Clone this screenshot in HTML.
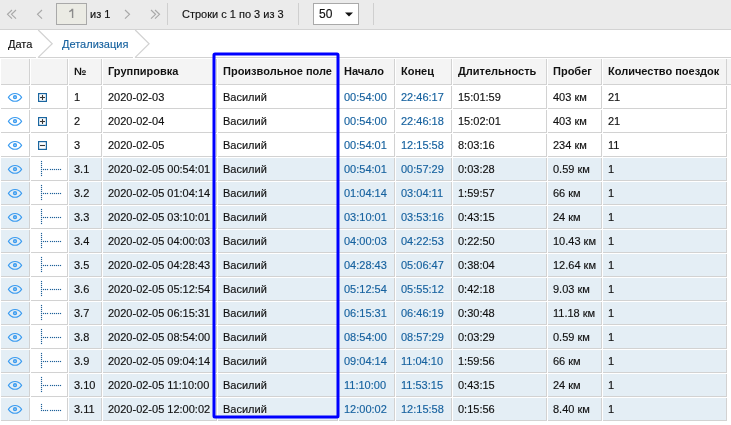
<!DOCTYPE html><html><head><meta charset="utf-8"><style>
html,body{margin:0;padding:0;background:#fff;}
body{width:731px;height:425px;overflow:hidden;position:relative;font-family:"Liberation Sans",sans-serif;font-size:11px;color:#111;}
.a{position:absolute;}
.c{position:absolute;box-sizing:border-box;border-right:1px solid #d2d2d2;border-bottom:1px solid #d2d2d2;}
.t{position:absolute;white-space:nowrap;line-height:12px;height:12px;will-change:transform;-webkit-text-stroke:0.15px currentColor;}
.b{font-weight:bold;-webkit-text-stroke:0;}
.bl{color:#17629f;}

</style></head><body>
<div class="a" style="left:0;top:0;width:731px;height:29px;background:#ebebeb;"></div>
<div class="a" style="left:0;top:29px;width:731px;height:1px;background:#d3d3d3;"></div>
<div class="a" style="left:56px;top:3px;width:31px;height:22px;box-sizing:border-box;border:1px solid #a9a9a9;background:#ebebe4;"></div>
<svg class="a" style="left:60px;top:5px;" width="20" height="16" viewBox="60 5 20 16"><path d="M72.6,18 L72.6,8.8 M72.6,8.9 C71.8,10.3 70.6,11.2 69.2,11.6" fill="none" stroke="#8c8c8c" stroke-width="1.4"/></svg>
<div class="t" style="left:90px;top:8px;">из 1</div>
<div class="t" style="left:182px;top:8px;">Строки с 1 по 3 из 3</div>
<div class="a" style="left:313px;top:3px;width:46px;height:22px;box-sizing:border-box;border:1px solid #a9a9a9;background:#fff;"></div>
<div class="t" style="left:319px;top:8px;font-size:12px;">50</div>
<svg class="a" style="left:0;top:0;" width="731" height="29" viewBox="0 0 731 29"><g fill="none" stroke="#a8a8a8" stroke-width="1.15"><polyline points="12,10 7.5,14.3 12,18.7"/><polyline points="16,10 11.5,14.3 16,18.7"/><polyline points="42,10 37.5,14.3 42,18.7"/><polyline points="125,10 129.5,14.3 125,18.7"/><polyline points="151,10 155.5,14.3 151,18.7"/><polyline points="155,10 159.5,14.3 155,18.7"/></g><g stroke="#cfcfcf" stroke-width="1"><line x1="167.5" y1="3" x2="167.5" y2="25"/><line x1="298.5" y1="3" x2="298.5" y2="25"/><line x1="373.5" y1="3" x2="373.5" y2="25"/></g><path d="M345,12.5 L353,12.5 L349,16.5 Z" fill="#111"/></svg>
<div class="a" style="left:0;top:57px;width:731px;height:1px;background:#d2d2d2;"></div>
<div class="a" style="left:36px;top:57px;width:2px;height:1px;background:#fff;"></div><div class="a" style="left:133px;top:57px;width:2px;height:1px;background:#fff;"></div>
<div class="t" style="left:8px;top:38px;">Дата</div>
<div class="t bl" style="left:62px;top:38px;color:#17629f;">Детализация</div>
<svg class="a" style="left:0;top:29px;" width="731" height="31" viewBox="0 29 731 31"><g fill="none" stroke="#d2d2d2" stroke-width="1.2"><polyline points="38.2,30 52.2,43.8 38,57.6"/><polyline points="135.2,30 149.1,43.8 135,57.6"/></g></svg>
<div class="c" style="left:1px;top:59px;width:29px;height:26px;background:#f4f4f4;"></div>
<div class="c" style="left:31px;top:59px;width:37px;height:26px;background:#f4f4f4;"></div>
<div class="c" style="left:69px;top:59px;width:33px;height:26px;background:#f4f4f4;"></div>
<div class="t b" style="left:74px;top:65px;">№</div>
<div class="c" style="left:103px;top:59px;width:114px;height:26px;background:#f4f4f4;"></div>
<div class="t b" style="left:108px;top:65px;">Группировка</div>
<div class="c" style="left:218px;top:59px;width:120px;height:26px;background:#f4f4f4;"></div>
<div class="t b" style="left:223px;top:65px;">Произвольное поле</div>
<div class="c" style="left:339px;top:59px;width:56px;height:26px;background:#f4f4f4;"></div>
<div class="t b" style="left:344px;top:65px;">Начало</div>
<div class="c" style="left:396px;top:59px;width:56px;height:26px;background:#f4f4f4;"></div>
<div class="t b" style="left:401px;top:65px;">Конец</div>
<div class="c" style="left:453px;top:59px;width:94px;height:26px;background:#f4f4f4;"></div>
<div class="t b" style="left:458px;top:65px;">Длительность</div>
<div class="c" style="left:548px;top:59px;width:54px;height:26px;background:#f4f4f4;"></div>
<div class="t b" style="left:553px;top:65px;">Пробег</div>
<div class="c" style="left:603px;top:59px;width:124px;height:26px;background:#f4f4f4;"></div>
<div class="t b" style="left:608px;top:65px;">Количество поездок</div>
<div class="a" style="left:727px;top:59px;width:4px;height:25px;background:#f4f4f4;"></div>
<div class="a" style="left:727px;top:84px;width:4px;height:1px;background:#d2d2d2;"></div>
<div class="c" style="left:1px;top:86px;width:29px;height:23px;background:#fff;"></div>
<div class="c" style="left:31px;top:86px;width:37px;height:23px;background:#fff;"></div>
<div class="c" style="left:69px;top:86px;width:33px;height:23px;background:#fff;"></div>
<div class="c" style="left:103px;top:86px;width:114px;height:23px;background:#fff;"></div>
<div class="c" style="left:218px;top:86px;width:120px;height:23px;background:#fff;"></div>
<div class="c" style="left:339px;top:86px;width:56px;height:23px;background:#fff;"></div>
<div class="c" style="left:396px;top:86px;width:56px;height:23px;background:#fff;"></div>
<div class="c" style="left:453px;top:86px;width:94px;height:23px;background:#fff;"></div>
<div class="c" style="left:548px;top:86px;width:54px;height:23px;background:#fff;"></div>
<div class="c" style="left:603px;top:86px;width:124px;height:23px;background:#fff;"></div>
<svg class="a" style="left:5px;top:90px;" width="20" height="14" viewBox="5 90 20 14"><path d="M8.4,97.4 C10.2,94.5 12.5,93.5 15,93.5 C17.5,93.5 19.8,94.5 21.6,97.4 C19.8,100.3 17.5,101.3 15,101.3 C12.5,101.3 10.2,100.3 8.4,97.4 Z" fill="none" stroke="#3a9bf0" stroke-width="1.1"/><circle cx="15" cy="97.2" r="1.35" fill="none" stroke="#3a9bf0" stroke-width="1.5"/></svg>
<svg class="a" style="left:36px;top:91px;" width="13" height="13" viewBox="36 91 13 13"><rect x="38.6" y="93.60" width="7.8" height="7.8" fill="#fff" stroke="#1a66a0" stroke-width="1.2"/><line x1="40" y1="97.5" x2="45" y2="97.5" stroke="#383838" stroke-width="1.1"/><line x1="42.5" y1="95.0" x2="42.5" y2="100.0" stroke="#383838" stroke-width="1.1"/></svg>
<div class="t" style="left:74px;top:91px;">1</div>
<div class="t" style="left:108px;top:91px;">2020-02-03</div>
<div class="t" style="left:223px;top:91px;">Василий</div>
<div class="t bl" style="left:344px;top:91px;">00:54:00</div>
<div class="t bl" style="left:401px;top:91px;">22:46:17</div>
<div class="t" style="left:458px;top:91px;">15:01:59</div>
<div class="t" style="left:553px;top:91px;">403 км</div>
<div class="t" style="left:608px;top:91px;">21</div>
<div class="c" style="left:1px;top:110px;width:29px;height:23px;background:#fff;"></div>
<div class="c" style="left:31px;top:110px;width:37px;height:23px;background:#fff;"></div>
<div class="c" style="left:69px;top:110px;width:33px;height:23px;background:#fff;"></div>
<div class="c" style="left:103px;top:110px;width:114px;height:23px;background:#fff;"></div>
<div class="c" style="left:218px;top:110px;width:120px;height:23px;background:#fff;"></div>
<div class="c" style="left:339px;top:110px;width:56px;height:23px;background:#fff;"></div>
<div class="c" style="left:396px;top:110px;width:56px;height:23px;background:#fff;"></div>
<div class="c" style="left:453px;top:110px;width:94px;height:23px;background:#fff;"></div>
<div class="c" style="left:548px;top:110px;width:54px;height:23px;background:#fff;"></div>
<div class="c" style="left:603px;top:110px;width:124px;height:23px;background:#fff;"></div>
<svg class="a" style="left:5px;top:114px;" width="20" height="14" viewBox="5 114 20 14"><path d="M8.4,121.4 C10.2,118.5 12.5,117.5 15,117.5 C17.5,117.5 19.8,118.5 21.6,121.4 C19.8,124.3 17.5,125.3 15,125.3 C12.5,125.3 10.2,124.3 8.4,121.4 Z" fill="none" stroke="#3a9bf0" stroke-width="1.1"/><circle cx="15" cy="121.2" r="1.35" fill="none" stroke="#3a9bf0" stroke-width="1.5"/></svg>
<svg class="a" style="left:36px;top:115px;" width="13" height="13" viewBox="36 115 13 13"><rect x="38.6" y="117.60" width="7.8" height="7.8" fill="#fff" stroke="#1a66a0" stroke-width="1.2"/><line x1="40" y1="121.5" x2="45" y2="121.5" stroke="#383838" stroke-width="1.1"/><line x1="42.5" y1="119.0" x2="42.5" y2="124.0" stroke="#383838" stroke-width="1.1"/></svg>
<div class="t" style="left:74px;top:115px;">2</div>
<div class="t" style="left:108px;top:115px;">2020-02-04</div>
<div class="t" style="left:223px;top:115px;">Василий</div>
<div class="t bl" style="left:344px;top:115px;">00:54:00</div>
<div class="t bl" style="left:401px;top:115px;">22:46:18</div>
<div class="t" style="left:458px;top:115px;">15:02:01</div>
<div class="t" style="left:553px;top:115px;">403 км</div>
<div class="t" style="left:608px;top:115px;">21</div>
<div class="c" style="left:1px;top:134px;width:29px;height:23px;background:#fff;"></div>
<div class="c" style="left:31px;top:134px;width:37px;height:23px;background:#fff;"></div>
<div class="c" style="left:69px;top:134px;width:33px;height:23px;background:#fff;"></div>
<div class="c" style="left:103px;top:134px;width:114px;height:23px;background:#fff;"></div>
<div class="c" style="left:218px;top:134px;width:120px;height:23px;background:#fff;"></div>
<div class="c" style="left:339px;top:134px;width:56px;height:23px;background:#fff;"></div>
<div class="c" style="left:396px;top:134px;width:56px;height:23px;background:#fff;"></div>
<div class="c" style="left:453px;top:134px;width:94px;height:23px;background:#fff;"></div>
<div class="c" style="left:548px;top:134px;width:54px;height:23px;background:#fff;"></div>
<div class="c" style="left:603px;top:134px;width:124px;height:23px;background:#fff;"></div>
<svg class="a" style="left:5px;top:138px;" width="20" height="14" viewBox="5 138 20 14"><path d="M8.4,145.4 C10.2,142.5 12.5,141.5 15,141.5 C17.5,141.5 19.8,142.5 21.6,145.4 C19.8,148.3 17.5,149.3 15,149.3 C12.5,149.3 10.2,148.3 8.4,145.4 Z" fill="none" stroke="#3a9bf0" stroke-width="1.1"/><circle cx="15" cy="145.2" r="1.35" fill="none" stroke="#3a9bf0" stroke-width="1.5"/></svg>
<svg class="a" style="left:36px;top:139px;" width="13" height="13" viewBox="36 139 13 13"><rect x="38.6" y="141.60" width="7.8" height="7.8" fill="#fff" stroke="#1a66a0" stroke-width="1.2"/><line x1="40" y1="145.5" x2="45" y2="145.5" stroke="#383838" stroke-width="1.1"/></svg>
<div class="t" style="left:74px;top:139px;">3</div>
<div class="t" style="left:108px;top:139px;">2020-02-05</div>
<div class="t" style="left:223px;top:139px;">Василий</div>
<div class="t bl" style="left:344px;top:139px;">00:54:01</div>
<div class="t bl" style="left:401px;top:139px;">12:15:58</div>
<div class="t" style="left:458px;top:139px;">8:03:16</div>
<div class="t" style="left:553px;top:139px;">234 км</div>
<div class="t" style="left:608px;top:139px;">11</div>
<div class="c" style="left:1px;top:158px;width:29px;height:23px;background:#e4eef5;"></div>
<div class="c" style="left:31px;top:158px;width:37px;height:23px;background:#fff;"></div>
<div class="c" style="left:69px;top:158px;width:33px;height:23px;background:#e4eef5;"></div>
<div class="c" style="left:103px;top:158px;width:114px;height:23px;background:#e4eef5;"></div>
<div class="c" style="left:218px;top:158px;width:120px;height:23px;background:#e4eef5;"></div>
<div class="c" style="left:339px;top:158px;width:56px;height:23px;background:#e4eef5;"></div>
<div class="c" style="left:396px;top:158px;width:56px;height:23px;background:#e4eef5;"></div>
<div class="c" style="left:453px;top:158px;width:94px;height:23px;background:#e4eef5;"></div>
<div class="c" style="left:548px;top:158px;width:54px;height:23px;background:#e4eef5;"></div>
<div class="c" style="left:603px;top:158px;width:124px;height:23px;background:#e4eef5;"></div>
<svg class="a" style="left:5px;top:162px;" width="20" height="14" viewBox="5 162 20 14"><path d="M8.4,169.4 C10.2,166.5 12.5,165.5 15,165.5 C17.5,165.5 19.8,166.5 21.6,169.4 C19.8,172.3 17.5,173.3 15,173.3 C12.5,173.3 10.2,172.3 8.4,169.4 Z" fill="none" stroke="#3a9bf0" stroke-width="1.1"/><circle cx="15" cy="169.2" r="1.35" fill="none" stroke="#3a9bf0" stroke-width="1.5"/></svg>
<svg class="a" style="left:31px;top:158px;" width="36" height="23" viewBox="31 158 36 23"><g fill="#1d6199"><rect x="40.93" y="160.93" width="1.15" height="1.15"/><rect x="40.93" y="162.93" width="1.15" height="1.15"/><rect x="40.93" y="164.93" width="1.15" height="1.15"/><rect x="40.93" y="166.93" width="1.15" height="1.15"/><rect x="40.93" y="168.93" width="1.15" height="1.15"/><rect x="40.93" y="170.93" width="1.15" height="1.15"/><rect x="40.93" y="172.93" width="1.15" height="1.15"/><rect x="40.93" y="174.93" width="1.15" height="1.15"/><rect x="42.93" y="168.93" width="1.15" height="1.15"/><rect x="44.93" y="168.93" width="1.15" height="1.15"/><rect x="46.93" y="168.93" width="1.15" height="1.15"/><rect x="49.93" y="168.93" width="1.15" height="1.15"/><rect x="51.93" y="168.93" width="1.15" height="1.15"/><rect x="53.93" y="168.93" width="1.15" height="1.15"/><rect x="55.93" y="168.93" width="1.15" height="1.15"/><rect x="57.93" y="168.93" width="1.15" height="1.15"/><rect x="59.93" y="168.93" width="1.15" height="1.15"/></g></svg>
<div class="t" style="left:74px;top:163px;">3.1</div>
<div class="t" style="left:108px;top:163px;">2020-02-05 00:54:01</div>
<div class="t" style="left:223px;top:163px;">Василий</div>
<div class="t bl" style="left:344px;top:163px;">00:54:01</div>
<div class="t bl" style="left:401px;top:163px;">00:57:29</div>
<div class="t" style="left:458px;top:163px;">0:03:28</div>
<div class="t" style="left:553px;top:163px;">0.59 км</div>
<div class="t" style="left:608px;top:163px;">1</div>
<div class="c" style="left:1px;top:182px;width:29px;height:23px;background:#e4eef5;"></div>
<div class="c" style="left:31px;top:182px;width:37px;height:23px;background:#fff;"></div>
<div class="c" style="left:69px;top:182px;width:33px;height:23px;background:#e4eef5;"></div>
<div class="c" style="left:103px;top:182px;width:114px;height:23px;background:#e4eef5;"></div>
<div class="c" style="left:218px;top:182px;width:120px;height:23px;background:#e4eef5;"></div>
<div class="c" style="left:339px;top:182px;width:56px;height:23px;background:#e4eef5;"></div>
<div class="c" style="left:396px;top:182px;width:56px;height:23px;background:#e4eef5;"></div>
<div class="c" style="left:453px;top:182px;width:94px;height:23px;background:#e4eef5;"></div>
<div class="c" style="left:548px;top:182px;width:54px;height:23px;background:#e4eef5;"></div>
<div class="c" style="left:603px;top:182px;width:124px;height:23px;background:#e4eef5;"></div>
<svg class="a" style="left:5px;top:186px;" width="20" height="14" viewBox="5 186 20 14"><path d="M8.4,193.4 C10.2,190.5 12.5,189.5 15,189.5 C17.5,189.5 19.8,190.5 21.6,193.4 C19.8,196.3 17.5,197.3 15,197.3 C12.5,197.3 10.2,196.3 8.4,193.4 Z" fill="none" stroke="#3a9bf0" stroke-width="1.1"/><circle cx="15" cy="193.2" r="1.35" fill="none" stroke="#3a9bf0" stroke-width="1.5"/></svg>
<svg class="a" style="left:31px;top:182px;" width="36" height="23" viewBox="31 182 36 23"><g fill="#1d6199"><rect x="40.93" y="184.93" width="1.15" height="1.15"/><rect x="40.93" y="186.93" width="1.15" height="1.15"/><rect x="40.93" y="188.93" width="1.15" height="1.15"/><rect x="40.93" y="190.93" width="1.15" height="1.15"/><rect x="40.93" y="192.93" width="1.15" height="1.15"/><rect x="40.93" y="194.93" width="1.15" height="1.15"/><rect x="40.93" y="196.93" width="1.15" height="1.15"/><rect x="40.93" y="198.93" width="1.15" height="1.15"/><rect x="42.93" y="192.93" width="1.15" height="1.15"/><rect x="44.93" y="192.93" width="1.15" height="1.15"/><rect x="46.93" y="192.93" width="1.15" height="1.15"/><rect x="49.93" y="192.93" width="1.15" height="1.15"/><rect x="51.93" y="192.93" width="1.15" height="1.15"/><rect x="53.93" y="192.93" width="1.15" height="1.15"/><rect x="55.93" y="192.93" width="1.15" height="1.15"/><rect x="57.93" y="192.93" width="1.15" height="1.15"/><rect x="59.93" y="192.93" width="1.15" height="1.15"/></g></svg>
<div class="t" style="left:74px;top:187px;">3.2</div>
<div class="t" style="left:108px;top:187px;">2020-02-05 01:04:14</div>
<div class="t" style="left:223px;top:187px;">Василий</div>
<div class="t bl" style="left:344px;top:187px;">01:04:14</div>
<div class="t bl" style="left:401px;top:187px;">03:04:11</div>
<div class="t" style="left:458px;top:187px;">1:59:57</div>
<div class="t" style="left:553px;top:187px;">66 км</div>
<div class="t" style="left:608px;top:187px;">1</div>
<div class="c" style="left:1px;top:206px;width:29px;height:23px;background:#e4eef5;"></div>
<div class="c" style="left:31px;top:206px;width:37px;height:23px;background:#fff;"></div>
<div class="c" style="left:69px;top:206px;width:33px;height:23px;background:#e4eef5;"></div>
<div class="c" style="left:103px;top:206px;width:114px;height:23px;background:#e4eef5;"></div>
<div class="c" style="left:218px;top:206px;width:120px;height:23px;background:#e4eef5;"></div>
<div class="c" style="left:339px;top:206px;width:56px;height:23px;background:#e4eef5;"></div>
<div class="c" style="left:396px;top:206px;width:56px;height:23px;background:#e4eef5;"></div>
<div class="c" style="left:453px;top:206px;width:94px;height:23px;background:#e4eef5;"></div>
<div class="c" style="left:548px;top:206px;width:54px;height:23px;background:#e4eef5;"></div>
<div class="c" style="left:603px;top:206px;width:124px;height:23px;background:#e4eef5;"></div>
<svg class="a" style="left:5px;top:210px;" width="20" height="14" viewBox="5 210 20 14"><path d="M8.4,217.4 C10.2,214.5 12.5,213.5 15,213.5 C17.5,213.5 19.8,214.5 21.6,217.4 C19.8,220.3 17.5,221.3 15,221.3 C12.5,221.3 10.2,220.3 8.4,217.4 Z" fill="none" stroke="#3a9bf0" stroke-width="1.1"/><circle cx="15" cy="217.2" r="1.35" fill="none" stroke="#3a9bf0" stroke-width="1.5"/></svg>
<svg class="a" style="left:31px;top:206px;" width="36" height="23" viewBox="31 206 36 23"><g fill="#1d6199"><rect x="40.93" y="208.93" width="1.15" height="1.15"/><rect x="40.93" y="210.93" width="1.15" height="1.15"/><rect x="40.93" y="212.93" width="1.15" height="1.15"/><rect x="40.93" y="214.93" width="1.15" height="1.15"/><rect x="40.93" y="216.93" width="1.15" height="1.15"/><rect x="40.93" y="218.93" width="1.15" height="1.15"/><rect x="40.93" y="220.93" width="1.15" height="1.15"/><rect x="40.93" y="222.93" width="1.15" height="1.15"/><rect x="42.93" y="216.93" width="1.15" height="1.15"/><rect x="44.93" y="216.93" width="1.15" height="1.15"/><rect x="46.93" y="216.93" width="1.15" height="1.15"/><rect x="49.93" y="216.93" width="1.15" height="1.15"/><rect x="51.93" y="216.93" width="1.15" height="1.15"/><rect x="53.93" y="216.93" width="1.15" height="1.15"/><rect x="55.93" y="216.93" width="1.15" height="1.15"/><rect x="57.93" y="216.93" width="1.15" height="1.15"/><rect x="59.93" y="216.93" width="1.15" height="1.15"/></g></svg>
<div class="t" style="left:74px;top:211px;">3.3</div>
<div class="t" style="left:108px;top:211px;">2020-02-05 03:10:01</div>
<div class="t" style="left:223px;top:211px;">Василий</div>
<div class="t bl" style="left:344px;top:211px;">03:10:01</div>
<div class="t bl" style="left:401px;top:211px;">03:53:16</div>
<div class="t" style="left:458px;top:211px;">0:43:15</div>
<div class="t" style="left:553px;top:211px;">24 км</div>
<div class="t" style="left:608px;top:211px;">1</div>
<div class="c" style="left:1px;top:230px;width:29px;height:23px;background:#e4eef5;"></div>
<div class="c" style="left:31px;top:230px;width:37px;height:23px;background:#fff;"></div>
<div class="c" style="left:69px;top:230px;width:33px;height:23px;background:#e4eef5;"></div>
<div class="c" style="left:103px;top:230px;width:114px;height:23px;background:#e4eef5;"></div>
<div class="c" style="left:218px;top:230px;width:120px;height:23px;background:#e4eef5;"></div>
<div class="c" style="left:339px;top:230px;width:56px;height:23px;background:#e4eef5;"></div>
<div class="c" style="left:396px;top:230px;width:56px;height:23px;background:#e4eef5;"></div>
<div class="c" style="left:453px;top:230px;width:94px;height:23px;background:#e4eef5;"></div>
<div class="c" style="left:548px;top:230px;width:54px;height:23px;background:#e4eef5;"></div>
<div class="c" style="left:603px;top:230px;width:124px;height:23px;background:#e4eef5;"></div>
<svg class="a" style="left:5px;top:234px;" width="20" height="14" viewBox="5 234 20 14"><path d="M8.4,241.4 C10.2,238.5 12.5,237.5 15,237.5 C17.5,237.5 19.8,238.5 21.6,241.4 C19.8,244.3 17.5,245.3 15,245.3 C12.5,245.3 10.2,244.3 8.4,241.4 Z" fill="none" stroke="#3a9bf0" stroke-width="1.1"/><circle cx="15" cy="241.2" r="1.35" fill="none" stroke="#3a9bf0" stroke-width="1.5"/></svg>
<svg class="a" style="left:31px;top:230px;" width="36" height="23" viewBox="31 230 36 23"><g fill="#1d6199"><rect x="40.93" y="232.93" width="1.15" height="1.15"/><rect x="40.93" y="234.93" width="1.15" height="1.15"/><rect x="40.93" y="236.93" width="1.15" height="1.15"/><rect x="40.93" y="238.93" width="1.15" height="1.15"/><rect x="40.93" y="240.93" width="1.15" height="1.15"/><rect x="40.93" y="242.93" width="1.15" height="1.15"/><rect x="40.93" y="244.93" width="1.15" height="1.15"/><rect x="40.93" y="246.93" width="1.15" height="1.15"/><rect x="42.93" y="240.93" width="1.15" height="1.15"/><rect x="44.93" y="240.93" width="1.15" height="1.15"/><rect x="46.93" y="240.93" width="1.15" height="1.15"/><rect x="49.93" y="240.93" width="1.15" height="1.15"/><rect x="51.93" y="240.93" width="1.15" height="1.15"/><rect x="53.93" y="240.93" width="1.15" height="1.15"/><rect x="55.93" y="240.93" width="1.15" height="1.15"/><rect x="57.93" y="240.93" width="1.15" height="1.15"/><rect x="59.93" y="240.93" width="1.15" height="1.15"/></g></svg>
<div class="t" style="left:74px;top:235px;">3.4</div>
<div class="t" style="left:108px;top:235px;">2020-02-05 04:00:03</div>
<div class="t" style="left:223px;top:235px;">Василий</div>
<div class="t bl" style="left:344px;top:235px;">04:00:03</div>
<div class="t bl" style="left:401px;top:235px;">04:22:53</div>
<div class="t" style="left:458px;top:235px;">0:22:50</div>
<div class="t" style="left:553px;top:235px;">10.43 км</div>
<div class="t" style="left:608px;top:235px;">1</div>
<div class="c" style="left:1px;top:254px;width:29px;height:23px;background:#e4eef5;"></div>
<div class="c" style="left:31px;top:254px;width:37px;height:23px;background:#fff;"></div>
<div class="c" style="left:69px;top:254px;width:33px;height:23px;background:#e4eef5;"></div>
<div class="c" style="left:103px;top:254px;width:114px;height:23px;background:#e4eef5;"></div>
<div class="c" style="left:218px;top:254px;width:120px;height:23px;background:#e4eef5;"></div>
<div class="c" style="left:339px;top:254px;width:56px;height:23px;background:#e4eef5;"></div>
<div class="c" style="left:396px;top:254px;width:56px;height:23px;background:#e4eef5;"></div>
<div class="c" style="left:453px;top:254px;width:94px;height:23px;background:#e4eef5;"></div>
<div class="c" style="left:548px;top:254px;width:54px;height:23px;background:#e4eef5;"></div>
<div class="c" style="left:603px;top:254px;width:124px;height:23px;background:#e4eef5;"></div>
<svg class="a" style="left:5px;top:258px;" width="20" height="14" viewBox="5 258 20 14"><path d="M8.4,265.4 C10.2,262.5 12.5,261.5 15,261.5 C17.5,261.5 19.8,262.5 21.6,265.4 C19.8,268.3 17.5,269.3 15,269.3 C12.5,269.3 10.2,268.3 8.4,265.4 Z" fill="none" stroke="#3a9bf0" stroke-width="1.1"/><circle cx="15" cy="265.2" r="1.35" fill="none" stroke="#3a9bf0" stroke-width="1.5"/></svg>
<svg class="a" style="left:31px;top:254px;" width="36" height="23" viewBox="31 254 36 23"><g fill="#1d6199"><rect x="40.93" y="256.93" width="1.15" height="1.15"/><rect x="40.93" y="258.93" width="1.15" height="1.15"/><rect x="40.93" y="260.93" width="1.15" height="1.15"/><rect x="40.93" y="262.93" width="1.15" height="1.15"/><rect x="40.93" y="264.93" width="1.15" height="1.15"/><rect x="40.93" y="266.93" width="1.15" height="1.15"/><rect x="40.93" y="268.93" width="1.15" height="1.15"/><rect x="40.93" y="270.93" width="1.15" height="1.15"/><rect x="42.93" y="264.93" width="1.15" height="1.15"/><rect x="44.93" y="264.93" width="1.15" height="1.15"/><rect x="46.93" y="264.93" width="1.15" height="1.15"/><rect x="49.93" y="264.93" width="1.15" height="1.15"/><rect x="51.93" y="264.93" width="1.15" height="1.15"/><rect x="53.93" y="264.93" width="1.15" height="1.15"/><rect x="55.93" y="264.93" width="1.15" height="1.15"/><rect x="57.93" y="264.93" width="1.15" height="1.15"/><rect x="59.93" y="264.93" width="1.15" height="1.15"/></g></svg>
<div class="t" style="left:74px;top:259px;">3.5</div>
<div class="t" style="left:108px;top:259px;">2020-02-05 04:28:43</div>
<div class="t" style="left:223px;top:259px;">Василий</div>
<div class="t bl" style="left:344px;top:259px;">04:28:43</div>
<div class="t bl" style="left:401px;top:259px;">05:06:47</div>
<div class="t" style="left:458px;top:259px;">0:38:04</div>
<div class="t" style="left:553px;top:259px;">12.64 км</div>
<div class="t" style="left:608px;top:259px;">1</div>
<div class="c" style="left:1px;top:278px;width:29px;height:23px;background:#e4eef5;"></div>
<div class="c" style="left:31px;top:278px;width:37px;height:23px;background:#fff;"></div>
<div class="c" style="left:69px;top:278px;width:33px;height:23px;background:#e4eef5;"></div>
<div class="c" style="left:103px;top:278px;width:114px;height:23px;background:#e4eef5;"></div>
<div class="c" style="left:218px;top:278px;width:120px;height:23px;background:#e4eef5;"></div>
<div class="c" style="left:339px;top:278px;width:56px;height:23px;background:#e4eef5;"></div>
<div class="c" style="left:396px;top:278px;width:56px;height:23px;background:#e4eef5;"></div>
<div class="c" style="left:453px;top:278px;width:94px;height:23px;background:#e4eef5;"></div>
<div class="c" style="left:548px;top:278px;width:54px;height:23px;background:#e4eef5;"></div>
<div class="c" style="left:603px;top:278px;width:124px;height:23px;background:#e4eef5;"></div>
<svg class="a" style="left:5px;top:282px;" width="20" height="14" viewBox="5 282 20 14"><path d="M8.4,289.4 C10.2,286.5 12.5,285.5 15,285.5 C17.5,285.5 19.8,286.5 21.6,289.4 C19.8,292.3 17.5,293.3 15,293.3 C12.5,293.3 10.2,292.3 8.4,289.4 Z" fill="none" stroke="#3a9bf0" stroke-width="1.1"/><circle cx="15" cy="289.2" r="1.35" fill="none" stroke="#3a9bf0" stroke-width="1.5"/></svg>
<svg class="a" style="left:31px;top:278px;" width="36" height="23" viewBox="31 278 36 23"><g fill="#1d6199"><rect x="40.93" y="280.93" width="1.15" height="1.15"/><rect x="40.93" y="282.93" width="1.15" height="1.15"/><rect x="40.93" y="284.93" width="1.15" height="1.15"/><rect x="40.93" y="286.93" width="1.15" height="1.15"/><rect x="40.93" y="288.93" width="1.15" height="1.15"/><rect x="40.93" y="290.93" width="1.15" height="1.15"/><rect x="40.93" y="292.93" width="1.15" height="1.15"/><rect x="40.93" y="294.93" width="1.15" height="1.15"/><rect x="42.93" y="288.93" width="1.15" height="1.15"/><rect x="44.93" y="288.93" width="1.15" height="1.15"/><rect x="46.93" y="288.93" width="1.15" height="1.15"/><rect x="49.93" y="288.93" width="1.15" height="1.15"/><rect x="51.93" y="288.93" width="1.15" height="1.15"/><rect x="53.93" y="288.93" width="1.15" height="1.15"/><rect x="55.93" y="288.93" width="1.15" height="1.15"/><rect x="57.93" y="288.93" width="1.15" height="1.15"/><rect x="59.93" y="288.93" width="1.15" height="1.15"/></g></svg>
<div class="t" style="left:74px;top:283px;">3.6</div>
<div class="t" style="left:108px;top:283px;">2020-02-05 05:12:54</div>
<div class="t" style="left:223px;top:283px;">Василий</div>
<div class="t bl" style="left:344px;top:283px;">05:12:54</div>
<div class="t bl" style="left:401px;top:283px;">05:55:12</div>
<div class="t" style="left:458px;top:283px;">0:42:18</div>
<div class="t" style="left:553px;top:283px;">9.03 км</div>
<div class="t" style="left:608px;top:283px;">1</div>
<div class="c" style="left:1px;top:302px;width:29px;height:23px;background:#e4eef5;"></div>
<div class="c" style="left:31px;top:302px;width:37px;height:23px;background:#fff;"></div>
<div class="c" style="left:69px;top:302px;width:33px;height:23px;background:#e4eef5;"></div>
<div class="c" style="left:103px;top:302px;width:114px;height:23px;background:#e4eef5;"></div>
<div class="c" style="left:218px;top:302px;width:120px;height:23px;background:#e4eef5;"></div>
<div class="c" style="left:339px;top:302px;width:56px;height:23px;background:#e4eef5;"></div>
<div class="c" style="left:396px;top:302px;width:56px;height:23px;background:#e4eef5;"></div>
<div class="c" style="left:453px;top:302px;width:94px;height:23px;background:#e4eef5;"></div>
<div class="c" style="left:548px;top:302px;width:54px;height:23px;background:#e4eef5;"></div>
<div class="c" style="left:603px;top:302px;width:124px;height:23px;background:#e4eef5;"></div>
<svg class="a" style="left:5px;top:306px;" width="20" height="14" viewBox="5 306 20 14"><path d="M8.4,313.4 C10.2,310.5 12.5,309.5 15,309.5 C17.5,309.5 19.8,310.5 21.6,313.4 C19.8,316.3 17.5,317.3 15,317.3 C12.5,317.3 10.2,316.3 8.4,313.4 Z" fill="none" stroke="#3a9bf0" stroke-width="1.1"/><circle cx="15" cy="313.2" r="1.35" fill="none" stroke="#3a9bf0" stroke-width="1.5"/></svg>
<svg class="a" style="left:31px;top:302px;" width="36" height="23" viewBox="31 302 36 23"><g fill="#1d6199"><rect x="40.93" y="304.93" width="1.15" height="1.15"/><rect x="40.93" y="306.93" width="1.15" height="1.15"/><rect x="40.93" y="308.93" width="1.15" height="1.15"/><rect x="40.93" y="310.93" width="1.15" height="1.15"/><rect x="40.93" y="312.93" width="1.15" height="1.15"/><rect x="40.93" y="314.93" width="1.15" height="1.15"/><rect x="40.93" y="316.93" width="1.15" height="1.15"/><rect x="40.93" y="318.93" width="1.15" height="1.15"/><rect x="42.93" y="312.93" width="1.15" height="1.15"/><rect x="44.93" y="312.93" width="1.15" height="1.15"/><rect x="46.93" y="312.93" width="1.15" height="1.15"/><rect x="49.93" y="312.93" width="1.15" height="1.15"/><rect x="51.93" y="312.93" width="1.15" height="1.15"/><rect x="53.93" y="312.93" width="1.15" height="1.15"/><rect x="55.93" y="312.93" width="1.15" height="1.15"/><rect x="57.93" y="312.93" width="1.15" height="1.15"/><rect x="59.93" y="312.93" width="1.15" height="1.15"/></g></svg>
<div class="t" style="left:74px;top:307px;">3.7</div>
<div class="t" style="left:108px;top:307px;">2020-02-05 06:15:31</div>
<div class="t" style="left:223px;top:307px;">Василий</div>
<div class="t bl" style="left:344px;top:307px;">06:15:31</div>
<div class="t bl" style="left:401px;top:307px;">06:46:19</div>
<div class="t" style="left:458px;top:307px;">0:30:48</div>
<div class="t" style="left:553px;top:307px;">11.18 км</div>
<div class="t" style="left:608px;top:307px;">1</div>
<div class="c" style="left:1px;top:326px;width:29px;height:23px;background:#e4eef5;"></div>
<div class="c" style="left:31px;top:326px;width:37px;height:23px;background:#fff;"></div>
<div class="c" style="left:69px;top:326px;width:33px;height:23px;background:#e4eef5;"></div>
<div class="c" style="left:103px;top:326px;width:114px;height:23px;background:#e4eef5;"></div>
<div class="c" style="left:218px;top:326px;width:120px;height:23px;background:#e4eef5;"></div>
<div class="c" style="left:339px;top:326px;width:56px;height:23px;background:#e4eef5;"></div>
<div class="c" style="left:396px;top:326px;width:56px;height:23px;background:#e4eef5;"></div>
<div class="c" style="left:453px;top:326px;width:94px;height:23px;background:#e4eef5;"></div>
<div class="c" style="left:548px;top:326px;width:54px;height:23px;background:#e4eef5;"></div>
<div class="c" style="left:603px;top:326px;width:124px;height:23px;background:#e4eef5;"></div>
<svg class="a" style="left:5px;top:330px;" width="20" height="14" viewBox="5 330 20 14"><path d="M8.4,337.4 C10.2,334.5 12.5,333.5 15,333.5 C17.5,333.5 19.8,334.5 21.6,337.4 C19.8,340.3 17.5,341.3 15,341.3 C12.5,341.3 10.2,340.3 8.4,337.4 Z" fill="none" stroke="#3a9bf0" stroke-width="1.1"/><circle cx="15" cy="337.2" r="1.35" fill="none" stroke="#3a9bf0" stroke-width="1.5"/></svg>
<svg class="a" style="left:31px;top:326px;" width="36" height="23" viewBox="31 326 36 23"><g fill="#1d6199"><rect x="40.93" y="328.93" width="1.15" height="1.15"/><rect x="40.93" y="330.93" width="1.15" height="1.15"/><rect x="40.93" y="332.93" width="1.15" height="1.15"/><rect x="40.93" y="334.93" width="1.15" height="1.15"/><rect x="40.93" y="336.93" width="1.15" height="1.15"/><rect x="40.93" y="338.93" width="1.15" height="1.15"/><rect x="40.93" y="340.93" width="1.15" height="1.15"/><rect x="40.93" y="342.93" width="1.15" height="1.15"/><rect x="42.93" y="336.93" width="1.15" height="1.15"/><rect x="44.93" y="336.93" width="1.15" height="1.15"/><rect x="46.93" y="336.93" width="1.15" height="1.15"/><rect x="49.93" y="336.93" width="1.15" height="1.15"/><rect x="51.93" y="336.93" width="1.15" height="1.15"/><rect x="53.93" y="336.93" width="1.15" height="1.15"/><rect x="55.93" y="336.93" width="1.15" height="1.15"/><rect x="57.93" y="336.93" width="1.15" height="1.15"/><rect x="59.93" y="336.93" width="1.15" height="1.15"/></g></svg>
<div class="t" style="left:74px;top:331px;">3.8</div>
<div class="t" style="left:108px;top:331px;">2020-02-05 08:54:00</div>
<div class="t" style="left:223px;top:331px;">Василий</div>
<div class="t bl" style="left:344px;top:331px;">08:54:00</div>
<div class="t bl" style="left:401px;top:331px;">08:57:29</div>
<div class="t" style="left:458px;top:331px;">0:03:29</div>
<div class="t" style="left:553px;top:331px;">0.59 км</div>
<div class="t" style="left:608px;top:331px;">1</div>
<div class="c" style="left:1px;top:350px;width:29px;height:23px;background:#e4eef5;"></div>
<div class="c" style="left:31px;top:350px;width:37px;height:23px;background:#fff;"></div>
<div class="c" style="left:69px;top:350px;width:33px;height:23px;background:#e4eef5;"></div>
<div class="c" style="left:103px;top:350px;width:114px;height:23px;background:#e4eef5;"></div>
<div class="c" style="left:218px;top:350px;width:120px;height:23px;background:#e4eef5;"></div>
<div class="c" style="left:339px;top:350px;width:56px;height:23px;background:#e4eef5;"></div>
<div class="c" style="left:396px;top:350px;width:56px;height:23px;background:#e4eef5;"></div>
<div class="c" style="left:453px;top:350px;width:94px;height:23px;background:#e4eef5;"></div>
<div class="c" style="left:548px;top:350px;width:54px;height:23px;background:#e4eef5;"></div>
<div class="c" style="left:603px;top:350px;width:124px;height:23px;background:#e4eef5;"></div>
<svg class="a" style="left:5px;top:354px;" width="20" height="14" viewBox="5 354 20 14"><path d="M8.4,361.4 C10.2,358.5 12.5,357.5 15,357.5 C17.5,357.5 19.8,358.5 21.6,361.4 C19.8,364.3 17.5,365.3 15,365.3 C12.5,365.3 10.2,364.3 8.4,361.4 Z" fill="none" stroke="#3a9bf0" stroke-width="1.1"/><circle cx="15" cy="361.2" r="1.35" fill="none" stroke="#3a9bf0" stroke-width="1.5"/></svg>
<svg class="a" style="left:31px;top:350px;" width="36" height="23" viewBox="31 350 36 23"><g fill="#1d6199"><rect x="40.93" y="352.93" width="1.15" height="1.15"/><rect x="40.93" y="354.93" width="1.15" height="1.15"/><rect x="40.93" y="356.93" width="1.15" height="1.15"/><rect x="40.93" y="358.93" width="1.15" height="1.15"/><rect x="40.93" y="360.93" width="1.15" height="1.15"/><rect x="40.93" y="362.93" width="1.15" height="1.15"/><rect x="40.93" y="364.93" width="1.15" height="1.15"/><rect x="40.93" y="366.93" width="1.15" height="1.15"/><rect x="42.93" y="360.93" width="1.15" height="1.15"/><rect x="44.93" y="360.93" width="1.15" height="1.15"/><rect x="46.93" y="360.93" width="1.15" height="1.15"/><rect x="49.93" y="360.93" width="1.15" height="1.15"/><rect x="51.93" y="360.93" width="1.15" height="1.15"/><rect x="53.93" y="360.93" width="1.15" height="1.15"/><rect x="55.93" y="360.93" width="1.15" height="1.15"/><rect x="57.93" y="360.93" width="1.15" height="1.15"/><rect x="59.93" y="360.93" width="1.15" height="1.15"/></g></svg>
<div class="t" style="left:74px;top:355px;">3.9</div>
<div class="t" style="left:108px;top:355px;">2020-02-05 09:04:14</div>
<div class="t" style="left:223px;top:355px;">Василий</div>
<div class="t bl" style="left:344px;top:355px;">09:04:14</div>
<div class="t bl" style="left:401px;top:355px;">11:04:10</div>
<div class="t" style="left:458px;top:355px;">1:59:56</div>
<div class="t" style="left:553px;top:355px;">66 км</div>
<div class="t" style="left:608px;top:355px;">1</div>
<div class="c" style="left:1px;top:374px;width:29px;height:23px;background:#e4eef5;"></div>
<div class="c" style="left:31px;top:374px;width:37px;height:23px;background:#fff;"></div>
<div class="c" style="left:69px;top:374px;width:33px;height:23px;background:#e4eef5;"></div>
<div class="c" style="left:103px;top:374px;width:114px;height:23px;background:#e4eef5;"></div>
<div class="c" style="left:218px;top:374px;width:120px;height:23px;background:#e4eef5;"></div>
<div class="c" style="left:339px;top:374px;width:56px;height:23px;background:#e4eef5;"></div>
<div class="c" style="left:396px;top:374px;width:56px;height:23px;background:#e4eef5;"></div>
<div class="c" style="left:453px;top:374px;width:94px;height:23px;background:#e4eef5;"></div>
<div class="c" style="left:548px;top:374px;width:54px;height:23px;background:#e4eef5;"></div>
<div class="c" style="left:603px;top:374px;width:124px;height:23px;background:#e4eef5;"></div>
<svg class="a" style="left:5px;top:378px;" width="20" height="14" viewBox="5 378 20 14"><path d="M8.4,385.4 C10.2,382.5 12.5,381.5 15,381.5 C17.5,381.5 19.8,382.5 21.6,385.4 C19.8,388.3 17.5,389.3 15,389.3 C12.5,389.3 10.2,388.3 8.4,385.4 Z" fill="none" stroke="#3a9bf0" stroke-width="1.1"/><circle cx="15" cy="385.2" r="1.35" fill="none" stroke="#3a9bf0" stroke-width="1.5"/></svg>
<svg class="a" style="left:31px;top:374px;" width="36" height="23" viewBox="31 374 36 23"><g fill="#1d6199"><rect x="40.93" y="376.93" width="1.15" height="1.15"/><rect x="40.93" y="378.93" width="1.15" height="1.15"/><rect x="40.93" y="380.93" width="1.15" height="1.15"/><rect x="40.93" y="382.93" width="1.15" height="1.15"/><rect x="40.93" y="384.93" width="1.15" height="1.15"/><rect x="40.93" y="386.93" width="1.15" height="1.15"/><rect x="40.93" y="388.93" width="1.15" height="1.15"/><rect x="40.93" y="390.93" width="1.15" height="1.15"/><rect x="42.93" y="384.93" width="1.15" height="1.15"/><rect x="44.93" y="384.93" width="1.15" height="1.15"/><rect x="46.93" y="384.93" width="1.15" height="1.15"/><rect x="49.93" y="384.93" width="1.15" height="1.15"/><rect x="51.93" y="384.93" width="1.15" height="1.15"/><rect x="53.93" y="384.93" width="1.15" height="1.15"/><rect x="55.93" y="384.93" width="1.15" height="1.15"/><rect x="57.93" y="384.93" width="1.15" height="1.15"/><rect x="59.93" y="384.93" width="1.15" height="1.15"/></g></svg>
<div class="t" style="left:74px;top:379px;">3.10</div>
<div class="t" style="left:108px;top:379px;">2020-02-05 11:10:00</div>
<div class="t" style="left:223px;top:379px;">Василий</div>
<div class="t bl" style="left:344px;top:379px;">11:10:00</div>
<div class="t bl" style="left:401px;top:379px;">11:53:15</div>
<div class="t" style="left:458px;top:379px;">0:43:15</div>
<div class="t" style="left:553px;top:379px;">24 км</div>
<div class="t" style="left:608px;top:379px;">1</div>
<div class="c" style="left:1px;top:398px;width:29px;height:23px;background:#e4eef5;"></div>
<div class="c" style="left:31px;top:398px;width:37px;height:23px;background:#fff;"></div>
<div class="c" style="left:69px;top:398px;width:33px;height:23px;background:#e4eef5;"></div>
<div class="c" style="left:103px;top:398px;width:114px;height:23px;background:#e4eef5;"></div>
<div class="c" style="left:218px;top:398px;width:120px;height:23px;background:#e4eef5;"></div>
<div class="c" style="left:339px;top:398px;width:56px;height:23px;background:#e4eef5;"></div>
<div class="c" style="left:396px;top:398px;width:56px;height:23px;background:#e4eef5;"></div>
<div class="c" style="left:453px;top:398px;width:94px;height:23px;background:#e4eef5;"></div>
<div class="c" style="left:548px;top:398px;width:54px;height:23px;background:#e4eef5;"></div>
<div class="c" style="left:603px;top:398px;width:124px;height:23px;background:#e4eef5;"></div>
<svg class="a" style="left:5px;top:402px;" width="20" height="14" viewBox="5 402 20 14"><path d="M8.4,409.4 C10.2,406.5 12.5,405.5 15,405.5 C17.5,405.5 19.8,406.5 21.6,409.4 C19.8,412.3 17.5,413.3 15,413.3 C12.5,413.3 10.2,412.3 8.4,409.4 Z" fill="none" stroke="#3a9bf0" stroke-width="1.1"/><circle cx="15" cy="409.2" r="1.35" fill="none" stroke="#3a9bf0" stroke-width="1.5"/></svg>
<svg class="a" style="left:31px;top:398px;" width="36" height="23" viewBox="31 398 36 23"><g fill="#1d6199"><rect x="40.93" y="403.93" width="1.15" height="1.15"/><rect x="40.93" y="405.93" width="1.15" height="1.15"/><rect x="40.93" y="407.93" width="1.15" height="1.15"/><rect x="40.93" y="409.93" width="1.15" height="1.15"/><rect x="42.93" y="409.93" width="1.15" height="1.15"/><rect x="44.93" y="409.93" width="1.15" height="1.15"/><rect x="46.93" y="409.93" width="1.15" height="1.15"/><rect x="49.93" y="409.93" width="1.15" height="1.15"/><rect x="51.93" y="409.93" width="1.15" height="1.15"/><rect x="53.93" y="409.93" width="1.15" height="1.15"/><rect x="55.93" y="409.93" width="1.15" height="1.15"/><rect x="57.93" y="409.93" width="1.15" height="1.15"/><rect x="59.93" y="409.93" width="1.15" height="1.15"/></g></svg>
<div class="t" style="left:74px;top:403px;">3.11</div>
<div class="t" style="left:108px;top:403px;">2020-02-05 12:00:02</div>
<div class="t" style="left:223px;top:403px;">Василий</div>
<div class="t bl" style="left:344px;top:403px;">12:00:02</div>
<div class="t bl" style="left:401px;top:403px;">12:15:58</div>
<div class="t" style="left:458px;top:403px;">0:15:56</div>
<div class="t" style="left:553px;top:403px;">8.40 км</div>
<div class="t" style="left:608px;top:403px;">1</div>
<svg class="a" style="left:0;top:0;" width="731" height="425"><rect x="214" y="54" width="124" height="363" rx="1" fill="none" stroke="#0000ff" stroke-width="3"/></svg>
</body></html>
